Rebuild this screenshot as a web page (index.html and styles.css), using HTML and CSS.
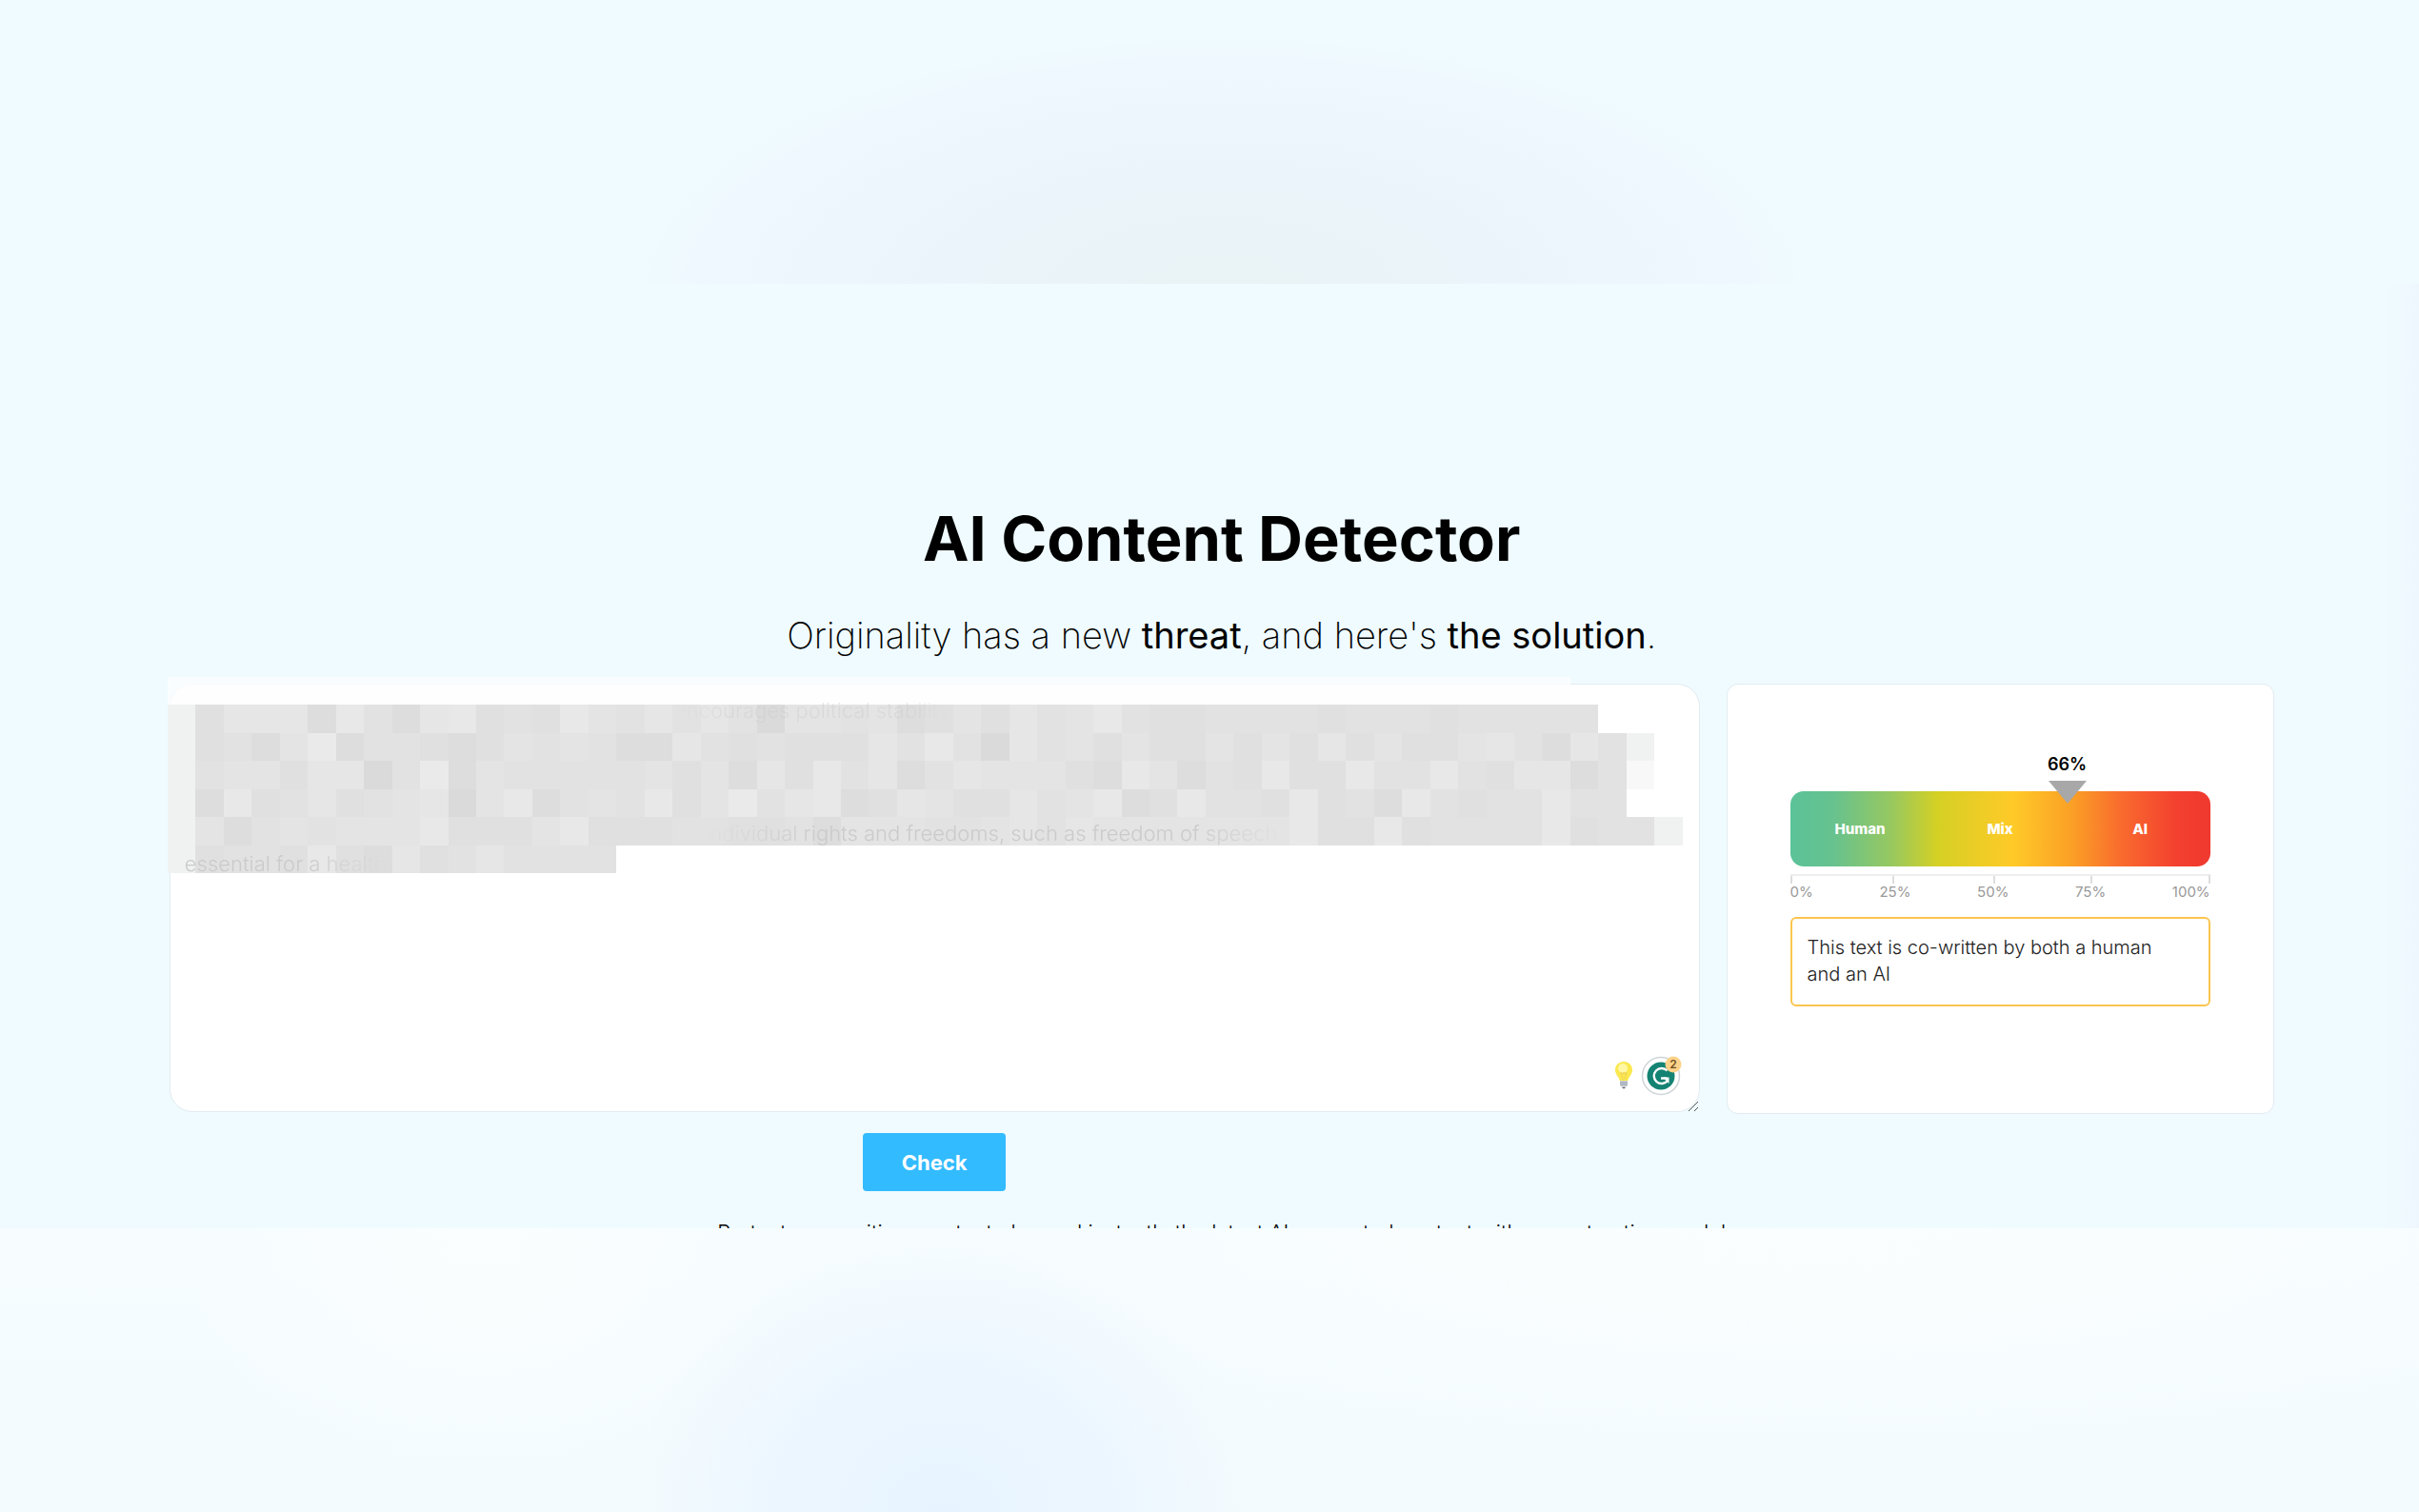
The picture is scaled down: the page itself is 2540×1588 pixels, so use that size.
FILE: index.html
```html
<!DOCTYPE html>
<html lang="en">
<head>
    <meta charset="UTF-8">
    <meta name="viewport" content="width=device-width, initial-scale=1.0">
    <title>AI Content Detector</title>
    <link rel="stylesheet" href="styles.css">
</head>
<body>
    <div class="band-top"></div>

    <main class="detector">
        <h1>AI Content Detector</h1>
        <p class="subtitle">Originality has a new <strong>threat</strong>, and here's <strong>the solution</strong>.</p>

        <div class="columns">
            <form id="checkForm" class="editor">
                <div class="input-wrap">
                    <textarea id="content" name="content" aria-label="Text to check"></textarea>
                    <svg id="mosaic" class="mosaic" viewBox="0 0 54 7" preserveAspectRatio="none" aria-hidden="true"></svg>
                    <span class="faded line-first">encourages political stability</span>
                    <span class="faded line-rights">individual rights and freedoms, such as freedom of speech,</span>
                    <span class="faded line-last">essential for a health</span>
                    <div class="tools">
                        <svg class="bulb" viewBox="0 0 20 30" aria-hidden="true">
                            <path d="M10 1C4.800 1 1 4.800 1 9.800c0 4 2.600 6 4 9.200.4 1 .5 2 1 2h8c.5 0 .6-1 1-2 1.400-3.200 4-5.200 4-9.200C19 4.800 15.200 1 10 1z" fill="#fbe84e"/>
                            <ellipse cx="9" cy="8" rx="5" ry="5" fill="#fff7a4"/>
                            <path d="M7 12l2 8M13 12l-2 8M7 12l2 2 1-2 1 2 2-2" fill="none" stroke="#ecd05a" stroke-width="1"/>
                            <path d="M6 21h8v5l-2 2H8l-2-2z" fill="#c9ced6"/>
                            <path d="M6 23h8M6 25h8" stroke="#9aa1ac" stroke-width="1"/>
                            <path d="M8 28h4l-2 1.500z" fill="#555"/>
                        </svg>
                        <svg class="grammar" viewBox="0 0 44 44" aria-hidden="true">
                            <circle cx="21" cy="23" r="19.500" fill="#fff" stroke="#cfd4d8" stroke-width="1.500"/>
                            <circle cx="21" cy="23" r="14.500" fill="#158373"/>
                            <path d="M27.500 17.500A8 8 0 1 0 28 28" fill="none" stroke="#fff" stroke-width="2.400"/>
                            <path d="M21 25.500h6" fill="none" stroke="#fff" stroke-width="2.400"/>
                            <path d="M23 24.500h6.500v6.500z" fill="#fff"/>
                            <circle cx="34" cy="11" r="8.500" fill="#fdd28a"/>
                            <text x="34" y="15" text-anchor="middle" class="badge-count">2</text>
                        </svg>
                    </div>
                    <svg class="grip" viewBox="0 0 10 10" aria-hidden="true">
                        <path d="M0 10L10 0M6 10l4-4" stroke="#555" stroke-width="1"/>
                    </svg>
                </div>
                <button type="submit">Check</button>
            </form>

            <section class="result">
                <div class="gauge">
                    <div class="pointer" style="left: 66%">
                        <span class="score">66%</span>
                        <span class="arrow"></span>
                    </div>
                    <div class="gauge-bar">
                        <span>Human</span>
                        <span>Mix</span>
                        <span>AI</span>
                    </div>
                </div>
                <div class="ticks"><i></i><i></i><i></i><i></i></div>
                <div class="scale">
                    <span>0%</span>
                    <span>25%</span>
                    <span>50%</span>
                    <span>75%</span>
                    <span>100%</span>
                </div>
                <p class="verdict">This text is co-written by both a human and an AI</p>
            </section>
        </div>

        <p class="note">Protect your writing, content plan and instantly the latest AI generated content with our extraction model</p>
    </main>

    <div class="band-bottom"></div>

    <script src="script.js"></script>
</body>
</html>
```
FILE: styles.css
```css
* {
    box-sizing: border-box;
}

body {
    font-family: Inter, 'Open Sans', sans-serif;
    background-color: #effbff;
    color: #000;
    margin: 0;
    min-height: 100vh;
    display: flex;
    flex-direction: column;
}

/* Soft backgrounds above and below the tool */
.band-top {
    height: 298px;
    background: radial-gradient(ellipse 24% 92% at 50.5% 105%, #e9f3f5 0%, #ebf4fa 45%, #eff8fe 92%, #effbff 100%);
}

.band-bottom {
    flex: 1;
    min-height: 200px;
    background:
        radial-gradient(ellipse 13% 95% at 39% 100%, #e7f4ff 0%, #ecf6ff 50%, rgba(245, 250, 255, 0) 100%),
        radial-gradient(ellipse 13% 90% at 20% 0%, #fbfeff 0%, rgba(251, 254, 255, 0) 100%),
        radial-gradient(ellipse 36% 80% at 75% 0%, #fbfefe 0%, rgba(251, 254, 255, 0) 100%),
        linear-gradient(#f6fcff, #f3fbfe);
}

.detector {
    padding: 234px 6% 0 7%;
    background: linear-gradient(to left, #eff7fe, #effbff 36px);
}

h1 {
    margin: 0;
    text-align: center;
    font-size: 65px;
    line-height: 68px;
    font-weight: 700;
}

.subtitle {
    margin: 43px 0 27px;
    text-align: center;
    font-size: 38px;
    line-height: 48px;
    font-weight: 200;
}

.subtitle strong {
    font-weight: 400;
}

.columns {
    display: grid;
    grid-template-columns: 1604fr 574fr;
    gap: 28px;
    align-items: start;
}

.editor {
    display: flex;
    flex-direction: column;
    align-items: center;
    gap: 22px;
}

.input-wrap {
    position: relative;
    width: 100%;
}

textarea {
    display: block;
    width: 100%;
    height: 450px;
    padding: 16px;
    font: inherit;
    font-size: 22px;
    background-color: #fff;
    border: 1px solid #e2ebf0;
    border-radius: 24px;
    resize: none;
}

/* Pixelated cover over the typed text */
.mosaic {
    position: absolute;
    left: -2px;
    top: -7px;
    width: 99%;
    height: 206px;
    pointer-events: none;
}

.faded {
    position: absolute;
    font-size: 22px;
    line-height: 28px;
    font-weight: 300;
    color: #cbcbcb;
    white-space: nowrap;
    -webkit-mask-image: linear-gradient(to right, transparent, #000 20%, #000 85%, transparent);
    mask-image: linear-gradient(to right, transparent, #000 20%, #000 85%, transparent);
}

.line-first {
    left: 33%;
    top: 14px;
    opacity: 0.4;
}

.line-rights {
    left: 35%;
    top: 143px;
}

.line-last {
    left: 16px;
    top: 175px;
    -webkit-mask-image: linear-gradient(to right, #000 60%, transparent);
    mask-image: linear-gradient(to right, #000 60%, transparent);
}

.tools {
    position: absolute;
    right: 18px;
    bottom: 17px;
    display: flex;
    align-items: center;
    gap: 8px;
}

.bulb {
    width: 20px;
    height: 30px;
}

.grammar {
    width: 44px;
    height: 44px;
}

.badge-count {
    font-size: 12px;
    font-weight: 600;
    fill: #70501c;
}

.grip {
    position: absolute;
    right: 2px;
    bottom: 1px;
    width: 10px;
    height: 10px;
}

button {
    width: 150px;
    height: 61px;
    font-family: inherit;
    font-size: 22px;
    font-weight: 700;
    color: #fff;
    background-color: #33bbff;
    border: none;
    border-radius: 4px;
    cursor: pointer;
}

.result {
    height: 452px;
    padding: 112px 66px 0;
    background-color: #fff;
    border: 1px solid #e2ebf0;
    border-radius: 12px;
}

.gauge {
    position: relative;
}

.gauge-bar {
    height: 79px;
    display: grid;
    grid-template-columns: repeat(3, 1fr);
    align-items: center;
    text-align: center;
    font-size: 15px;
    font-weight: 800;
    color: #fff;
    border-radius: 14px;
    background: linear-gradient(to right, #5bc298 0%, #66c28f 10%, #97c860 24%, #d5d024 35%, #ffca28 53%, #fba026 67%, #f96a2e 79%, #f3402f 92%, #f0382f 100%);
}

.pointer {
    position: absolute;
    top: -40px;
    display: flex;
    flex-direction: column;
    align-items: center;
    gap: 5px;
    margin-left: -22px;
    width: 44px;
}

.score {
    font-size: 18px;
    line-height: 24px;
    font-weight: 600;
}

.arrow {
    border-left: 20px solid transparent;
    border-right: 20px solid transparent;
    border-top: 24px solid #a8a8a8;
}

.ticks {
    display: grid;
    grid-template-columns: 108fr 106fr 103fr 124fr;
    height: 10px;
    margin-top: 8px;
    border-top: 2px solid #eee;
    border-right: 2px solid #ddd;
}

.ticks i {
    border-left: 2px solid #ddd;
}

.scale {
    display: flex;
    justify-content: space-between;
    font-size: 15px;
    line-height: 18px;
    color: #999;
}

.verdict {
    margin: 17px 0 0;
    padding: 16px 24px 18px 16px;
    font-size: 20px;
    line-height: 28px;
    font-weight: 300;
    color: #222;
    border: 2px solid #fbc54f;
    border-radius: 6px;
}

/* Only the top of the next paragraph is in view */
.note {
    margin: 31px 0 0;
    height: 8px;
    overflow: hidden;
    text-align: center;
    font-size: 22px;
    line-height: 24px;
    font-weight: 300;
}
```
FILE: script.js
```js
// One letter per cell, from dark (a) to light (h); x, y and z are the pale edge cells
const rows = [
    "zzzzzzzzzzzzzzzzzzzzzzzzzzzzzzzzzzzzzzzzzzzzzzzzzz....",
    "xcfffbgdbfgcdcgedfdfdaeedebcecfdegdccddddcdddcddddd...",
    "xcdbehbddcbcededbbfdcdcccfdgdafdececcececfceccefdbfdx.",
    "xdeecffadhbedddddecebfcgdfbdfeeecbgebdcgccgddgdcffbdy.",
    "xbgcdfcdefaegbdedgcehdfgbcfeccfdegbcgddcgcdbgdcddgdd..",
    "xebdedeeegcccegcccddccdbeeeddefdfeeeeeeegccgcddddgcddx",
    "xcddcgcbfcdfdddd"
];

const shades = {
    a: "#dadada", b: "#dddddd", c: "#e0e0e0", d: "#e2e2e2",
    e: "#e4e4e4", f: "#e6e6e6", g: "#e8e8e8", h: "#eaeaea",
    x: "#f0f2f2", y: "#f8f8f8", z: "rgba(253, 254, 255, 0.75)"
};

const mosaic = document.getElementById("mosaic");

rows.forEach(function (row, y) {
    [...row].forEach(function (cell, x) {
        if (cell === ".") {
            return;
        }
        const rect = document.createElementNS("http://www.w3.org/2000/svg", "rect");
        rect.setAttribute("x", x);
        rect.setAttribute("y", y);
        rect.setAttribute("width", 1);
        rect.setAttribute("height", 1);
        rect.setAttribute("fill", shades[cell]);
        rect.setAttribute("shape-rendering", "crispEdges");
        mosaic.appendChild(rect);
    });
});

document.getElementById("checkForm").addEventListener("submit", function (e) {
    e.preventDefault();
});
```
